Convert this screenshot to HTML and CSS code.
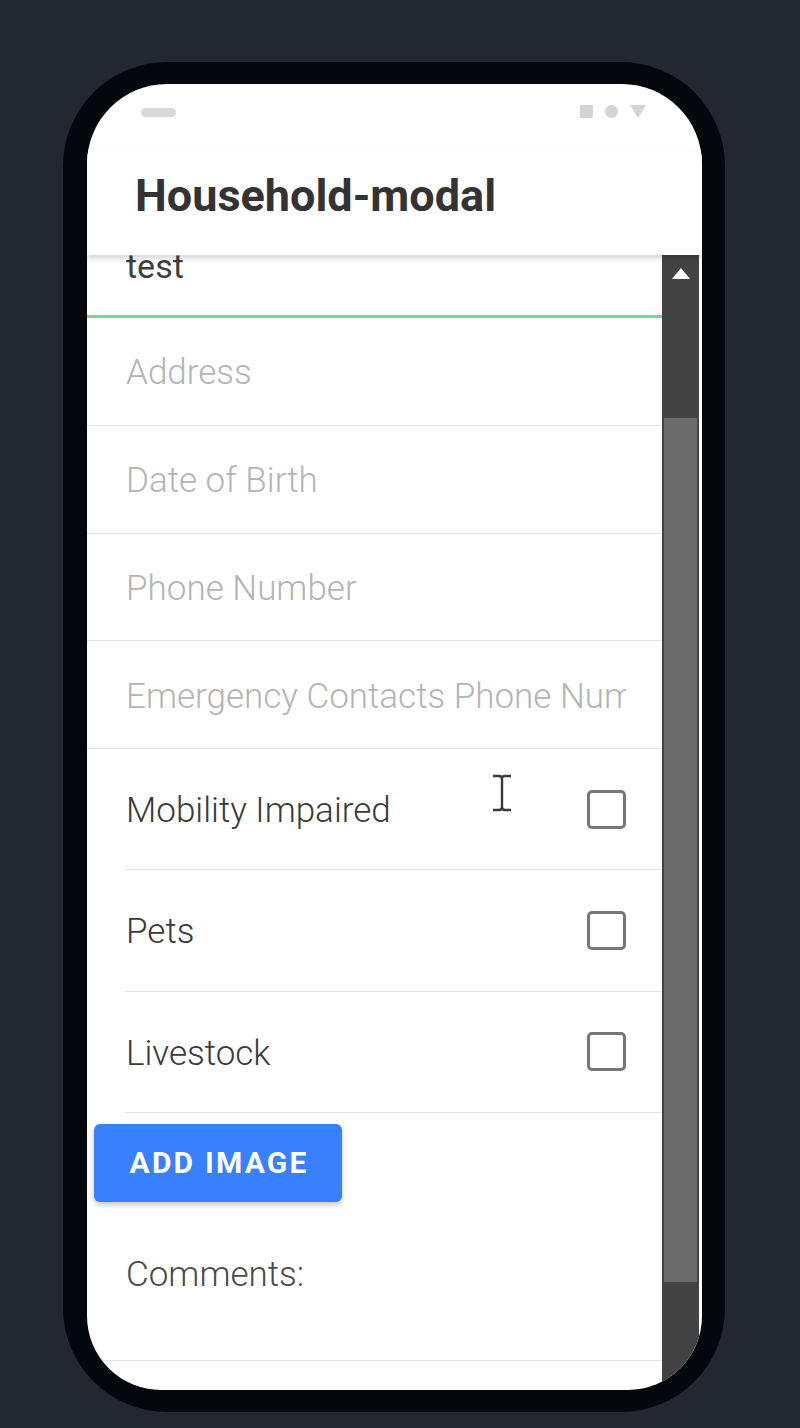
FILE: index.html
```html
<!DOCTYPE html>
<html>
<head>
<meta charset="utf-8">
<link rel="stylesheet" href="styles.css">
</head>
<body>
<div class="phone">
  <div class="screen">
    <div class="status">
      <span class="pill"></span>
      <span class="icons">
        <span class="sq"></span>
        <span class="dot"></span>
        <svg class="tri" width="16" height="13" viewBox="0 0 16 13"><path d="M0 0 H16 L8 13 Z" fill="#d4d4d4"/></svg>
      </span>
    </div>
    <header class="header"><h1 class="title">Household-modal</h1></header>
    <div class="body">
      <div class="content">
        <div class="field active"><span class="value">test</span></div>
        <div class="field"><span class="ph">Address</span></div>
        <div class="field"><span class="ph">Date of Birth</span></div>
        <div class="field"><span class="ph">Phone Number</span></div>
        <div class="field"><span class="ph clip">Emergency Contacts Phone Number</span></div>
        <div class="check"><span class="label">Mobility Impaired</span><span class="box"></span></div>
        <div class="check"><span class="label">Pets</span><span class="box"></span></div>
        <div class="check"><span class="label">Livestock</span><span class="box"></span></div>
        <div class="btnrow"><button class="btn">ADD IMAGE</button></div>
        <div class="comments"><span class="label">Comments:</span></div>
      </div>
      <div class="scrollbar">
        <div class="arrow"><svg width="18" height="11" viewBox="0 0 18 11"><path d="M0 11 L9 0 L18 11 Z" fill="#ffffff"/></svg></div>
        <div class="thumb"></div>
      </div>
    </div>
    <svg class="ibeam" width="22" height="38" viewBox="0 0 22 38"><path d="M2 2 H8 Q11 2 11 5 Q11 2 14 2 H20 M11 5 V33 M2 36 H8 Q11 36 11 33 Q11 36 14 36 H20" fill="none" stroke="#3a3a3a" stroke-width="2.4"/></svg>
  </div>
</div>
</body>
</html>
```
FILE: styles.css
```css
html, body {
  margin: 0;
  padding: 0;
}
body {
  background: #23272e;
  width: 800px;
  height: 1428px;
  overflow: hidden;
  font-family: Roboto, "Liberation Sans", sans-serif;
}
.phone {
  margin: 62px 0 0 63px;
  width: 662px;
  height: 1350px;
  box-sizing: border-box;
  padding: 22px 23px 22px 24px;
  background: #04070c;
  border-radius: 104px;
}
.screen {
  position: relative;
  width: 615px;
  height: 1306px;
  background: #ffffff;
  border-radius: 80px 80px 74px 74px;
  overflow: hidden;
  display: flex;
  flex-direction: column;
}
.status {
  height: 66px;
  flex: none;
  box-sizing: border-box;
  padding: 24px 56px 0 54px;
  display: flex;
  justify-content: space-between;
  align-items: flex-start;
}
.pill {
  width: 35px;
  height: 9px;
  border-radius: 5px;
  background: #d9d9d9;
}
.icons {
  display: flex;
  align-items: center;
  gap: 12px;
  margin-top: -3px;
}
.sq {
  width: 13px;
  height: 13px;
  background: #d4d4d4;
  border-radius: 1px;
}
.dot {
  width: 13px;
  height: 13px;
  background: #d4d4d4;
  border-radius: 50%;
}
.tri { display: block; }
.header {
  height: 105px;
  flex: none;
  box-sizing: border-box;
  padding: 20px 0 0 48px;
  position: relative;
  z-index: 2;
  box-shadow: 0 3px 6px rgba(0,0,0,0.18);
  background: #ffffff;
}
.title {
  margin: 0;
  font-size: 45px;
  line-height: 52px;
  font-weight: 700;
  color: #333333;
}
.body {
  flex: 1;
  display: flex;
  overflow: hidden;
}
.content {
  width: 575px;
  flex: none;
  overflow: hidden;
  display: flex;
  flex-direction: column;
}
.field {
  flex: none;
  height: 107.75px;
  box-sizing: border-box;
  border-bottom: 1px solid #e4e4e4;
  padding: 4px 36px 0 39px;
  display: flex;
  align-items: center;
  font-size: 35px;
  line-height: 40px;
  font-weight: 300;
  overflow: hidden;
  white-space: nowrap;
}
.field.active {
  height: 63px;
  align-items: flex-end;
  padding-top: 0;
  padding-bottom: 29px;
  border-bottom: 3px solid #72d69c;
  overflow: visible;
}
.value { color: #3f3f3f; font-weight: 400; font-size: 34px; }
.ph { color: #b4b4b4; }
.clip {
  display: block;
  overflow: hidden;
  width: 100%;
}
.check {
  flex: none;
  height: 121.3px;
  box-sizing: border-box;
  margin-left: 38px;
  padding: 0 36px 0 1px;
  border-bottom: 1px solid #e4e4e4;
  display: flex;
  align-items: center;
  justify-content: space-between;
}
.label {
  font-size: 35px;
  line-height: 40px;
  font-weight: 300;
  color: #3a3a3a;
}
.check .label { padding-top: 4px; }
.box {
  width: 39px;
  height: 39px;
  box-sizing: border-box;
  border: 3px solid #777777;
  border-radius: 5px;
}
.btnrow {
  flex: none;
  padding: 11px 0 0 7px;
}
.btn {
  width: 248px;
  height: 78px;
  border: none;
  border-radius: 6px;
  background: #3880ff;
  color: #ffffff;
  font-family: Roboto, "Liberation Sans", sans-serif;
  font-weight: 700;
  font-size: 30px;
  letter-spacing: 2.2px;
  box-shadow: 0 3px 5px rgba(0,0,0,0.22);
  padding: 0 0 0 2px;
}
.comments {
  flex: none;
  height: 159px;
  box-sizing: border-box;
  padding: 53px 0 0 39px;
  border-bottom: 1px solid #e4e4e4;
}
.comments .label { color: #4a4a4a; }
.scrollbar {
  width: 37px;
  flex: none;
  background: #434343;
  display: flex;
  flex-direction: column;
}
.arrow {
  height: 30px;
  display: flex;
  justify-content: center;
  padding-top: 13px;
  box-sizing: border-box;
}
.arrow svg { display: block; }
.thumb {
  margin-top: 133px;
  height: 864px;
  margin-left: 2px;
  margin-right: 2px;
  background: #6b6b6b;
}
.ibeam {
  position: absolute;
  left: 404px;
  top: 690px;
}
```
